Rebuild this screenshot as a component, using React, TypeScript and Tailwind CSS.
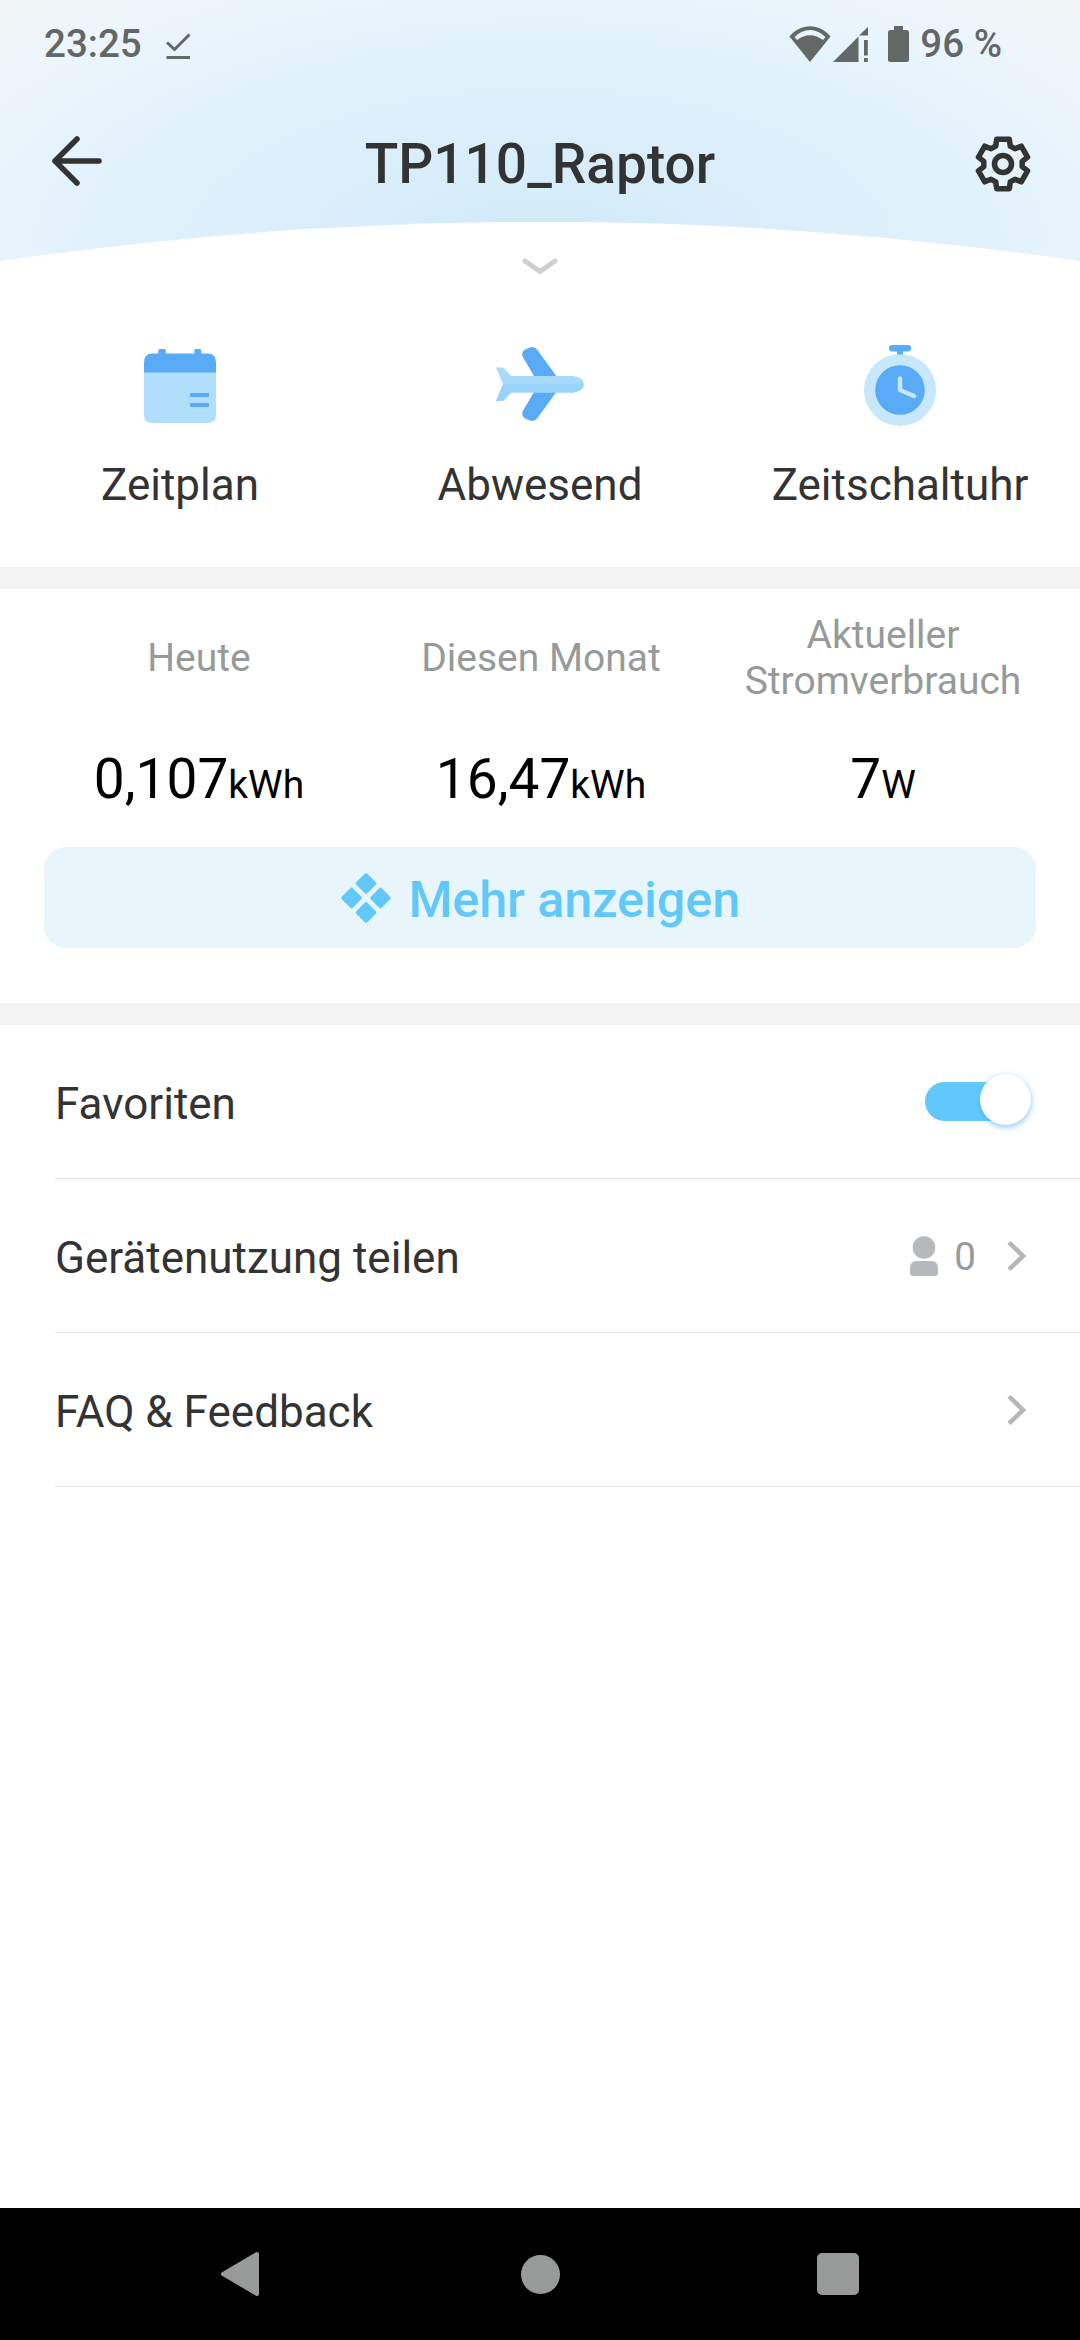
import type { ReactNode } from "react";

const toPoint = (r: number, deg: number) => {
  const a = (deg * Math.PI) / 180;
  return `${(r * Math.sin(a)).toFixed(2)},${(-r * Math.cos(a)).toFixed(2)}`;
};

const gearPoints = [0, 60, 120, 180, 240, 300]
  .flatMap((t) => [toPoint(19.4, t - 22), toPoint(25.5, t - 14.3), toPoint(25.5, t + 14.3), toPoint(19.4, t + 22)])
  .join(" ");

const StatusBar = () => (
  <div className="flex h-[88px] items-center pl-11 pr-[78px] text-[38.5px] font-medium text-[#636766]">
    <span>23:25</span>
    <svg className="ml-[22px] mt-1 h-7 w-7" viewBox="0 0 28 28" fill="none" stroke="currentColor" strokeWidth="3">
      <path d="M3 10.500 L10.500 17.500 L25.500 2.500" />
      <path d="M2.500 25.500 H26" />
    </svg>
    <div className="ml-auto flex items-center">
      <svg className="h-9 w-[42px]" viewBox="0 0 42 36" fill="currentColor">
        <path d="M21 36 L0.5 10.5 C12 -3.2 30 -3.2 41.5 10.5 Z M5.5 11 L8 14 C16 7.5 26 7.5 34 14 L36.500 11 C27 1.5 15 1.500 5.500 11 Z" fillRule="evenodd" />
      </svg>
      <svg className="ml-0.5 h-9 w-9" viewBox="0 0 36 36" fill="currentColor">
        <path d="M0 36 L25.500 10.500 V36 Z M26 9.500 L35 1 V9.500 Z" />
        <rect x="31" y="14" width="3.800" height="15.500" />
        <rect x="31" y="32" width="3.800" height="4" />
      </svg>
      <svg className="ml-[19px] h-9 w-[21px]" viewBox="0 0 21 36" fill="currentColor">
        <rect x="6" width="9" height="6" />
        <rect y="4" width="21" height="32" rx="2.500" />
      </svg>
      <span className="ml-[11px]">96 %</span>
    </div>
  </div>
);

const Header = () => (
  <header className="bg-[radial-gradient(748px_340px_at_540px_250px,#cfeaf9_0%,#daeefa_30%,#e0f1fb_56%,#e7f4fb_72%,#edf5fb_85%,#f1f5f8_100%)]">
    <StatusBar />
    <div className="flex h-[134px] items-center justify-between pl-[51px] pr-[49px] pt-[18px] text-[#333]">
      <svg className="-mt-1.5 h-[54px] w-[54px]" viewBox="0 0 54 54" fill="none" stroke="currentColor" strokeWidth="5.500" strokeLinecap="round" strokeLinejoin="round">
        <path d="M26 5 L4 27 L26 49 M4 27 H48" />
      </svg>
      <h1 className="text-[55px] font-medium leading-none">TP110_Raptor</h1>
      <svg className="h-14 w-14" viewBox="-28 -28 56 56" fill="none" stroke="currentColor" strokeWidth="5.500" strokeLinejoin="round">
        <polygon points={gearPoints} />
        <circle r="8.500" />
      </svg>
    </div>
    <svg className="block h-[62px] w-full" viewBox="0 0 1080 62" fill="none">
      <path d="M0 39 A3758 3758 0 0 1 1080 39 V62 H0 Z" fill="#fff" />
      <path d="M525 39 L540 49.500 L555 39" stroke="#cdd0d2" strokeWidth="5" strokeLinecap="round" strokeLinejoin="round" />
    </svg>
  </header>
);

const CalendarIcon = () => (
  <svg className="h-[84px] w-[90px]" viewBox="0 0 90 84">
    <path d="M9 27 H81 V71 Q81 79 73 79 H17 Q9 79 9 71 Z" fill="#b0defb" />
    <path d="M9 28.500 V18 Q9 9.500 17.500 9.500 H72.500 Q81 9.500 81 18 V28.500 Z" fill="#5aabf7" />
    <rect x="23.300" y="5" width="7.500" height="8" rx="1.500" fill="#5aabf7" />
    <rect x="59.300" y="5" width="7" height="8" rx="1.500" fill="#5aabf7" />
    <rect x="55" y="49" width="19" height="4" rx="1" fill="#5aabf7" />
    <rect x="55" y="59" width="19" height="4" rx="1" fill="#5aabf7" />
  </svg>
);

const PlaneIcon = () => (
  <svg className="h-[84px] w-[90px]" viewBox="0 0 90 84">
    <path d="M39 32 L27.800 13 Q26 8.500 30 5.500 L35 3.500 Q39.500 2 42.500 6 L62 33 V47 L42.500 74 Q39.500 78 35 76.500 L30 74.500 Q26 71.500 27.800 67 L39 48 Z" fill="#5aabf7" />
    <path d="M1 23.500 H7 Q9 23.500 10.500 25.500 L16 32 H78 Q89 33.500 89 40.300 Q89 47 78 48.500 H16 L9 56 Q8 57 6.500 57 H1 L8 40.300 Z" fill="#a9dafb" />
    <path d="M8 40.300 H89 Q88 47 78 48.500 H16 L9 56 Q8 57 6.500 57 H1 Z" fill="#97d3fb" />
  </svg>
);

const TimerIcon = () => (
  <svg className="h-[84px] w-[90px]" viewBox="0 0 90 84">
    <circle cx="45" cy="46" r="36" fill="#c7e7fa" />
    <circle cx="45" cy="46" r="24.800" fill="#5aabf7" />
    <rect x="34" y="1" width="22" height="6.500" rx="3" fill="#5aabf7" />
    <rect x="42" y="5" width="6" height="5.500" fill="#5aabf7" />
    <path d="M45 34.500 V46 L59 52" fill="none" stroke="#c7e7fa" strokeWidth="4.500" strokeLinecap="round" strokeLinejoin="round" />
  </svg>
);

const ACTIONS = [
  { label: "Zeitplan", icon: <CalendarIcon /> },
  { label: "Abwesend", icon: <PlaneIcon /> },
  { label: "Zeitschaltuhr", icon: <TimerIcon /> },
];

const STATS = [
  { label: "Heute", value: "0,107", unit: "kWh" },
  { label: "Diesen Monat", value: "16,47", unit: "kWh" },
  { label: "Aktueller Stromverbrauch", value: "7", unit: "W" },
];

const Chevron = () => (
  <svg className="h-8 w-5" viewBox="0 0 20 32" fill="none" stroke="#b4b7b9" strokeWidth="4.500">
    <path d="M2 2.500 L16 16 L2 29.500" />
  </svg>
);

const Row = ({ label, children }: { label: string; children: ReactNode }) => (
  <div className="ml-[55px] flex h-[154px] items-center justify-between border-b border-[#e6e6e6] pr-[53px]">
    <span className="mt-1 text-[44px] text-[#333]">{label}</span>
    {children}
  </div>
);

export default function App() {
  return (
    <div className="flex h-[2340px] w-[1080px] flex-col bg-white font-[Roboto,sans-serif]">
      <Header />

      <section className="grid h-[283px] grid-cols-3 pt-[60px]">
        {ACTIONS.map((a) => (
          <div key={a.label} className="flex flex-col items-center">
            {a.icon}
            <span className="mt-[31px] text-[44px] leading-[52px] text-[#333]">{a.label}</span>
          </div>
        ))}
      </section>

      <div className="h-[22px] bg-[#f4f4f4]" />

      <section className="h-[414px] pt-[23px]">
        <div className="grid grid-cols-3 pl-7 pr-[26px] text-center">
          {STATS.map((s) => (
            <div key={s.label} className="flex flex-col items-center">
              <div className="flex h-[92px] w-[300px] items-center justify-center text-[39px] leading-[46px] text-[#969a99]">
                {s.label}
              </div>
              <div className="mt-[43px] h-16 text-[55px] leading-[64px] text-black">
                {s.value}
                <span className="text-[39px] leading-none">{s.unit}</span>
              </div>
            </div>
          ))}
        </div>
        <button className="mx-11 mt-9 flex h-[101px] w-[992px] items-center justify-center rounded-[22px] bg-[#e8f6fb] text-[#62c8fb]">
          <svg className="h-[52px] w-[52px]" viewBox="-26 -26 52 52" fill="currentColor">
            <g transform="rotate(45)">
              <rect x="-18" y="-18" width="15.600" height="15.600" rx="1.800" />
              <rect x="2.400" y="-18" width="15.600" height="15.600" rx="1.800" />
              <rect x="-18" y="2.400" width="15.600" height="15.600" rx="1.800" />
              <rect x="2.400" y="2.400" width="15.600" height="15.600" rx="1.800" />
            </g>
          </svg>
          <span className="ml-[17px] mt-[5px] text-[50.2px] font-medium leading-none">Mehr anzeigen</span>
        </button>
      </section>

      <div className="h-[22px] bg-[#f4f4f4]" />

      <section className="grow">
        <Row label="Favoriten">
          <div className="-mr-1 flex h-[39px] w-[106px] items-center justify-end rounded-full bg-[linear-gradient(to_right,#62c8fb_80px,transparent_80px)]">
            <div className="-mt-1 size-[51px] rounded-full bg-white shadow-[0_2px_5px_1px_rgba(90,171,247,0.55)]" />
          </div>
        </Row>
        <Row label="Gerätenutzung teilen">
          <div className="flex items-center">
            <svg className="h-10 w-7" viewBox="0 0 28 40" fill="#b6babd">
              <circle cx="14" cy="11.500" r="11.300" />
              <path d="M0 37 V32 Q0 25 7 25 H21 Q28 25 28 32 V37 Q28 40 25 40 H3 Q0 40 0 37 Z" />
            </svg>
            <span className="ml-4 mr-[31px] mt-[3px] text-[38.5px] text-[#969a99]">0</span>
            <Chevron />
          </div>
        </Row>
        <Row label="FAQ & Feedback">
          <Chevron />
        </Row>
      </section>

      <nav className="flex h-[132px] items-center justify-between bg-black pl-[220px] pr-[221px]">
        <svg className="h-[46px] w-10" viewBox="0 0 40 46" fill="#989a99" stroke="#989a99" strokeWidth="4" strokeLinejoin="round">
          <path d="M37 3 V43 L3 23 Z" />
        </svg>
        <div className="ml-[3px] size-[39px] rounded-full bg-[#989a99]" />
        <div className="size-[42px] rounded-[5px] bg-[#989a99]" />
      </nav>
    </div>
  );
}
